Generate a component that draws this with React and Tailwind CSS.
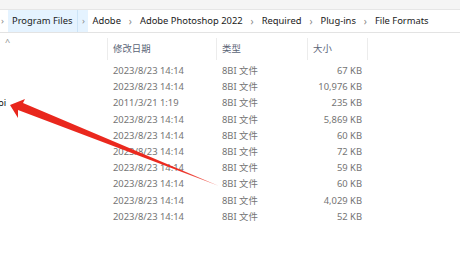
import React from 'react';

const rows = [
  { date: '2023/8/23 14:14', size: '67 KB' },
  { date: '2023/8/23 14:14', size: '10,976 KB' },
  { date: '2011/3/21 1:19', size: '235 KB', name: 'pi' },
  { date: '2023/8/23 14:14', size: '5,869 KB' },
  { date: '2023/8/23 14:14', size: '60 KB' },
  { date: '2023/8/23 14:14', size: '72 KB' },
  { date: '2023/8/23 14:14', size: '59 KB' },
  { date: '2023/8/23 14:14', size: '60 KB' },
  { date: '2023/8/23 14:14', size: '4,029 KB' },
  { date: '2023/8/23 14:14', size: '52 KB' },
];

const crumbs = ['Adobe', 'Adobe Photoshop 2022', 'Required', 'Plug-ins', 'File Formats'];

const Chevron = () => (
  <span className="w-[11px] flex items-center justify-center text-[#8a8a8a] text-[10px]">›</span>
);

export default function App() {
  return (
    <div
      className="relative w-[460px] h-[280px] overflow-hidden bg-white text-[9.4px]"
      style={{ fontFamily: '"Noto Sans", "Noto Sans CJK SC", sans-serif' }}
    >
      {/* top strip */}
      <div className="h-[10px] bg-[#f5f5f5] border-b border-[#e6e6e6]" />

      {/* address bar */}
      <div className="h-[23px] flex items-stretch border-b border-[#e3e3e3] text-[#1a1a1a]">
        <span className="w-[8px] flex items-center justify-start pl-[1px] text-[#8a8a8a]">›</span>
        <div className="flex items-stretch bg-[#e5f3ff]">
          <span className="flex items-center pl-[4px] pr-[5px]">Program Files</span>
          <span className="w-[11px] flex items-center justify-center border-l border-[#cce4f7] text-[#8a8a8a]">›</span>
        </div>
        {crumbs.map((c, i) => (
          <React.Fragment key={c}>
            <span className="flex items-center px-[4px]">{c}</span>
            {i < crumbs.length - 1 && <Chevron />}
          </React.Fragment>
        ))}
      </div>

      {/* column headers */}
      <div className="mt-[5px] h-[22px] flex text-[#5b6577]">
        <div className="w-[107px] relative">
          <span className="absolute left-[5px] top-[-3px] text-[#8c8c8c] text-[9px]">^</span>
        </div>
        <div className="w-[109px] border-l border-[#ececec] flex items-center pl-[5px]">修改日期</div>
        <div className="w-[91px] border-l border-[#ececec] flex items-center pl-[5px]">类型</div>
        <div className="w-[61px] border-l border-r border-[#ececec] flex items-center pl-[5px]">大小</div>
      </div>

      {/* rows */}
      <div className="mt-[3px] text-[#747474]">
        {rows.map((r, i) => (
          <div key={i} className="h-[16.2px] flex items-center">
            <div className="w-[107px] text-[#111]">
              {r.name && <span className="-ml-[2px]">{r.name}</span>}
            </div>
            <div className="w-[109px] pl-[6px]">{r.date}</div>
            <div className="w-[91px] pl-[6px]">8BI 文件</div>
            <div className="w-[61px] pr-[6px] text-right">{r.size}</div>
          </div>
        ))}
      </div>

      {/* red arrow annotation */}
      <svg className="absolute inset-0 pointer-events-none" width="460" height="280" viewBox="0 0 460 280">
        <defs>
          <linearGradient id="ar" x1="10" y1="105" x2="219" y2="186" gradientUnits="userSpaceOnUse">
            <stop offset="0" stopColor="#e8261c" />
            <stop offset="0.8" stopColor="#ec2a20" />
            <stop offset="1" stopColor="#f07a70" />
          </linearGradient>
        </defs>
        <polygon
          points="10,105 25,99 23,103 219,186 18,110 18,118"
          fill="url(#ar)"
        />
      </svg>
    </div>
  );
}
